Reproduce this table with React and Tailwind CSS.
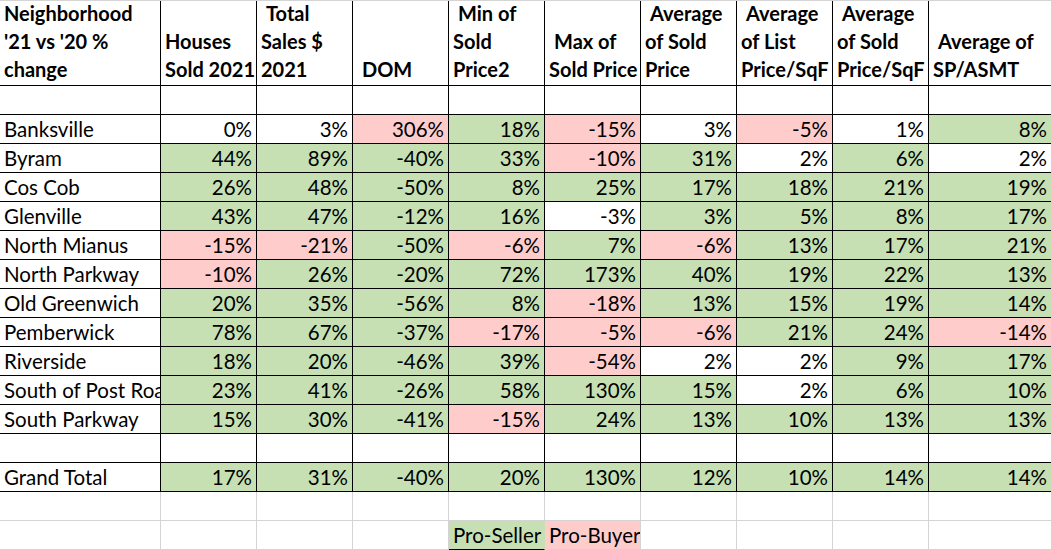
const rows = [
  ["Banksville", ["0%", "3%", "306%", "18%", "-15%", "3%", "-5%", "1%", "8%"], "wwpgpwpwg"],
  ["Byram", ["44%", "89%", "-40%", "33%", "-10%", "31%", "2%", "6%", "2%"], "ggggpgwgw"],
  ["Cos Cob", ["26%", "48%", "-50%", "8%", "25%", "17%", "18%", "21%", "19%"], "ggggggggg"],
  ["Glenville", ["43%", "47%", "-12%", "16%", "-3%", "3%", "5%", "8%", "17%"], "ggggwgggg"],
  ["North Mianus", ["-15%", "-21%", "-50%", "-6%", "7%", "-6%", "13%", "17%", "21%"], "ppgpgpggg"],
  ["North Parkway", ["-10%", "26%", "-20%", "72%", "173%", "40%", "19%", "22%", "13%"], "pgggggggg"],
  ["Old Greenwich", ["20%", "35%", "-56%", "8%", "-18%", "13%", "15%", "19%", "14%"], "ggggpgggg"],
  ["Pemberwick", ["78%", "67%", "-37%", "-17%", "-5%", "-6%", "21%", "24%", "-14%"], "gggpppggp"],
  ["Riverside", ["18%", "20%", "-46%", "39%", "-54%", "2%", "2%", "9%", "17%"], "ggggpwwgg"],
  ["South of Post Road", ["23%", "41%", "-26%", "58%", "130%", "15%", "2%", "6%", "10%"], "ggggggwgg"],
  ["South Parkway", ["15%", "30%", "-41%", "-15%", "24%", "13%", "10%", "13%", "13%"], "gggpggggg"],
];

const total = ["17%", "31%", "-40%", "20%", "130%", "12%", "10%", "14%", "14%"];

// each header: list of lines, true = line starts with a space
const headers = [
  [["Neighborhood"], ["'21 vs '20 %"], ["change"]],
  [["Houses"], ["Sold 2021"]],
  [["Total", true], ["Sales $"], ["2021"]],
  [["DOM", true]],
  [["Min of", true], ["Sold"], ["Price2"]],
  [["Max of", true], ["Sold Price"]],
  [["Average", true], ["of Sold"], ["Price"]],
  [["Average", true], ["of List"], ["Price/SqF"]],
  [["Average", true], ["of Sold"], ["Price/SqF"]],
  [["Average of", true], ["SP/ASMT"]],
];

const fill = (c) => {
  if (c === "g") return "bg-[#c6e0b4]";
  if (c === "p") return "bg-[#ffcccc]";
  return "bg-white";
};

function Cell({ children, className = "", gray }) {
  return (
    <div
      className={
        "h-[29px] border-r border-b overflow-hidden whitespace-nowrap px-[4px] leading-[29px] " +
        (gray ? "border-[#d4d4d4] " : "border-black ") +
        className
      }
    >
      {children}
    </div>
  );
}

function EmptyRow({ gray }) {
  return Array.from({ length: 10 }).map((_, i) => (
    <Cell key={i} gray={gray} className={i === 9 ? "border-r-[#d4d4d4]" : ""} />
  ));
}

export default function App() {
  return (
    <div
      className="w-[1051px] h-[550px] overflow-hidden bg-white text-black border-t border-[#d4d4d4]"
      style={{ fontFamily: "Lato, 'Open Sans', sans-serif" }}
    >
      <div className="grid grid-cols-[161px_repeat(8,96px)_123px] text-[20.5px]">
        {headers.map((h, i) => (
          <div
            key={i}
            className={
              "h-[85px] border-r border-b border-black flex flex-col justify-end pb-[2px] font-bold text-[20px] leading-[28px] " +
              (i === 9 ? "border-r-[#d4d4d4]" : "")
            }
          >
            {h.map(([t, sp], j) => (
              <div key={j} className={"whitespace-nowrap " + (sp ? "pl-[9px]" : "pl-[4px]")}>
                {t}
              </div>
            ))}
          </div>
        ))}

        <EmptyRow />

        {rows.map(([name, vals, colors]) => (
          <>
            <Cell key={name}>{name}</Cell>
            {vals.map((v, i) => (
              <Cell
                key={name + i}
                className={"text-right " + fill(colors[i]) + (i === 8 ? " border-r-[#d4d4d4]" : "")}
              >
                {v}
              </Cell>
            ))}
          </>
        ))}

        <EmptyRow />

        <Cell>Grand Total</Cell>
        {total.map((v, i) => (
          <Cell key={"t" + i} className={"text-right bg-[#c6e0b4]" + (i === 8 ? " border-r-[#d4d4d4]" : "")}>
            {v}
          </Cell>
        ))}

        <EmptyRow gray />

        {Array.from({ length: 10 }).map((_, i) => {
          if (i === 4)
            return (
              <Cell key={"l" + i} className="bg-[#c6e0b4] border-r-[#c6e0b4]">
                Pro-Seller
              </Cell>
            );
          if (i === 5)
            return (
              <Cell key={"l" + i} gray className="bg-[#ffcccc]">
                Pro-Buyer
              </Cell>
            );
          return <Cell key={"l" + i} gray />;
        })}
      </div>
    </div>
  );
}
